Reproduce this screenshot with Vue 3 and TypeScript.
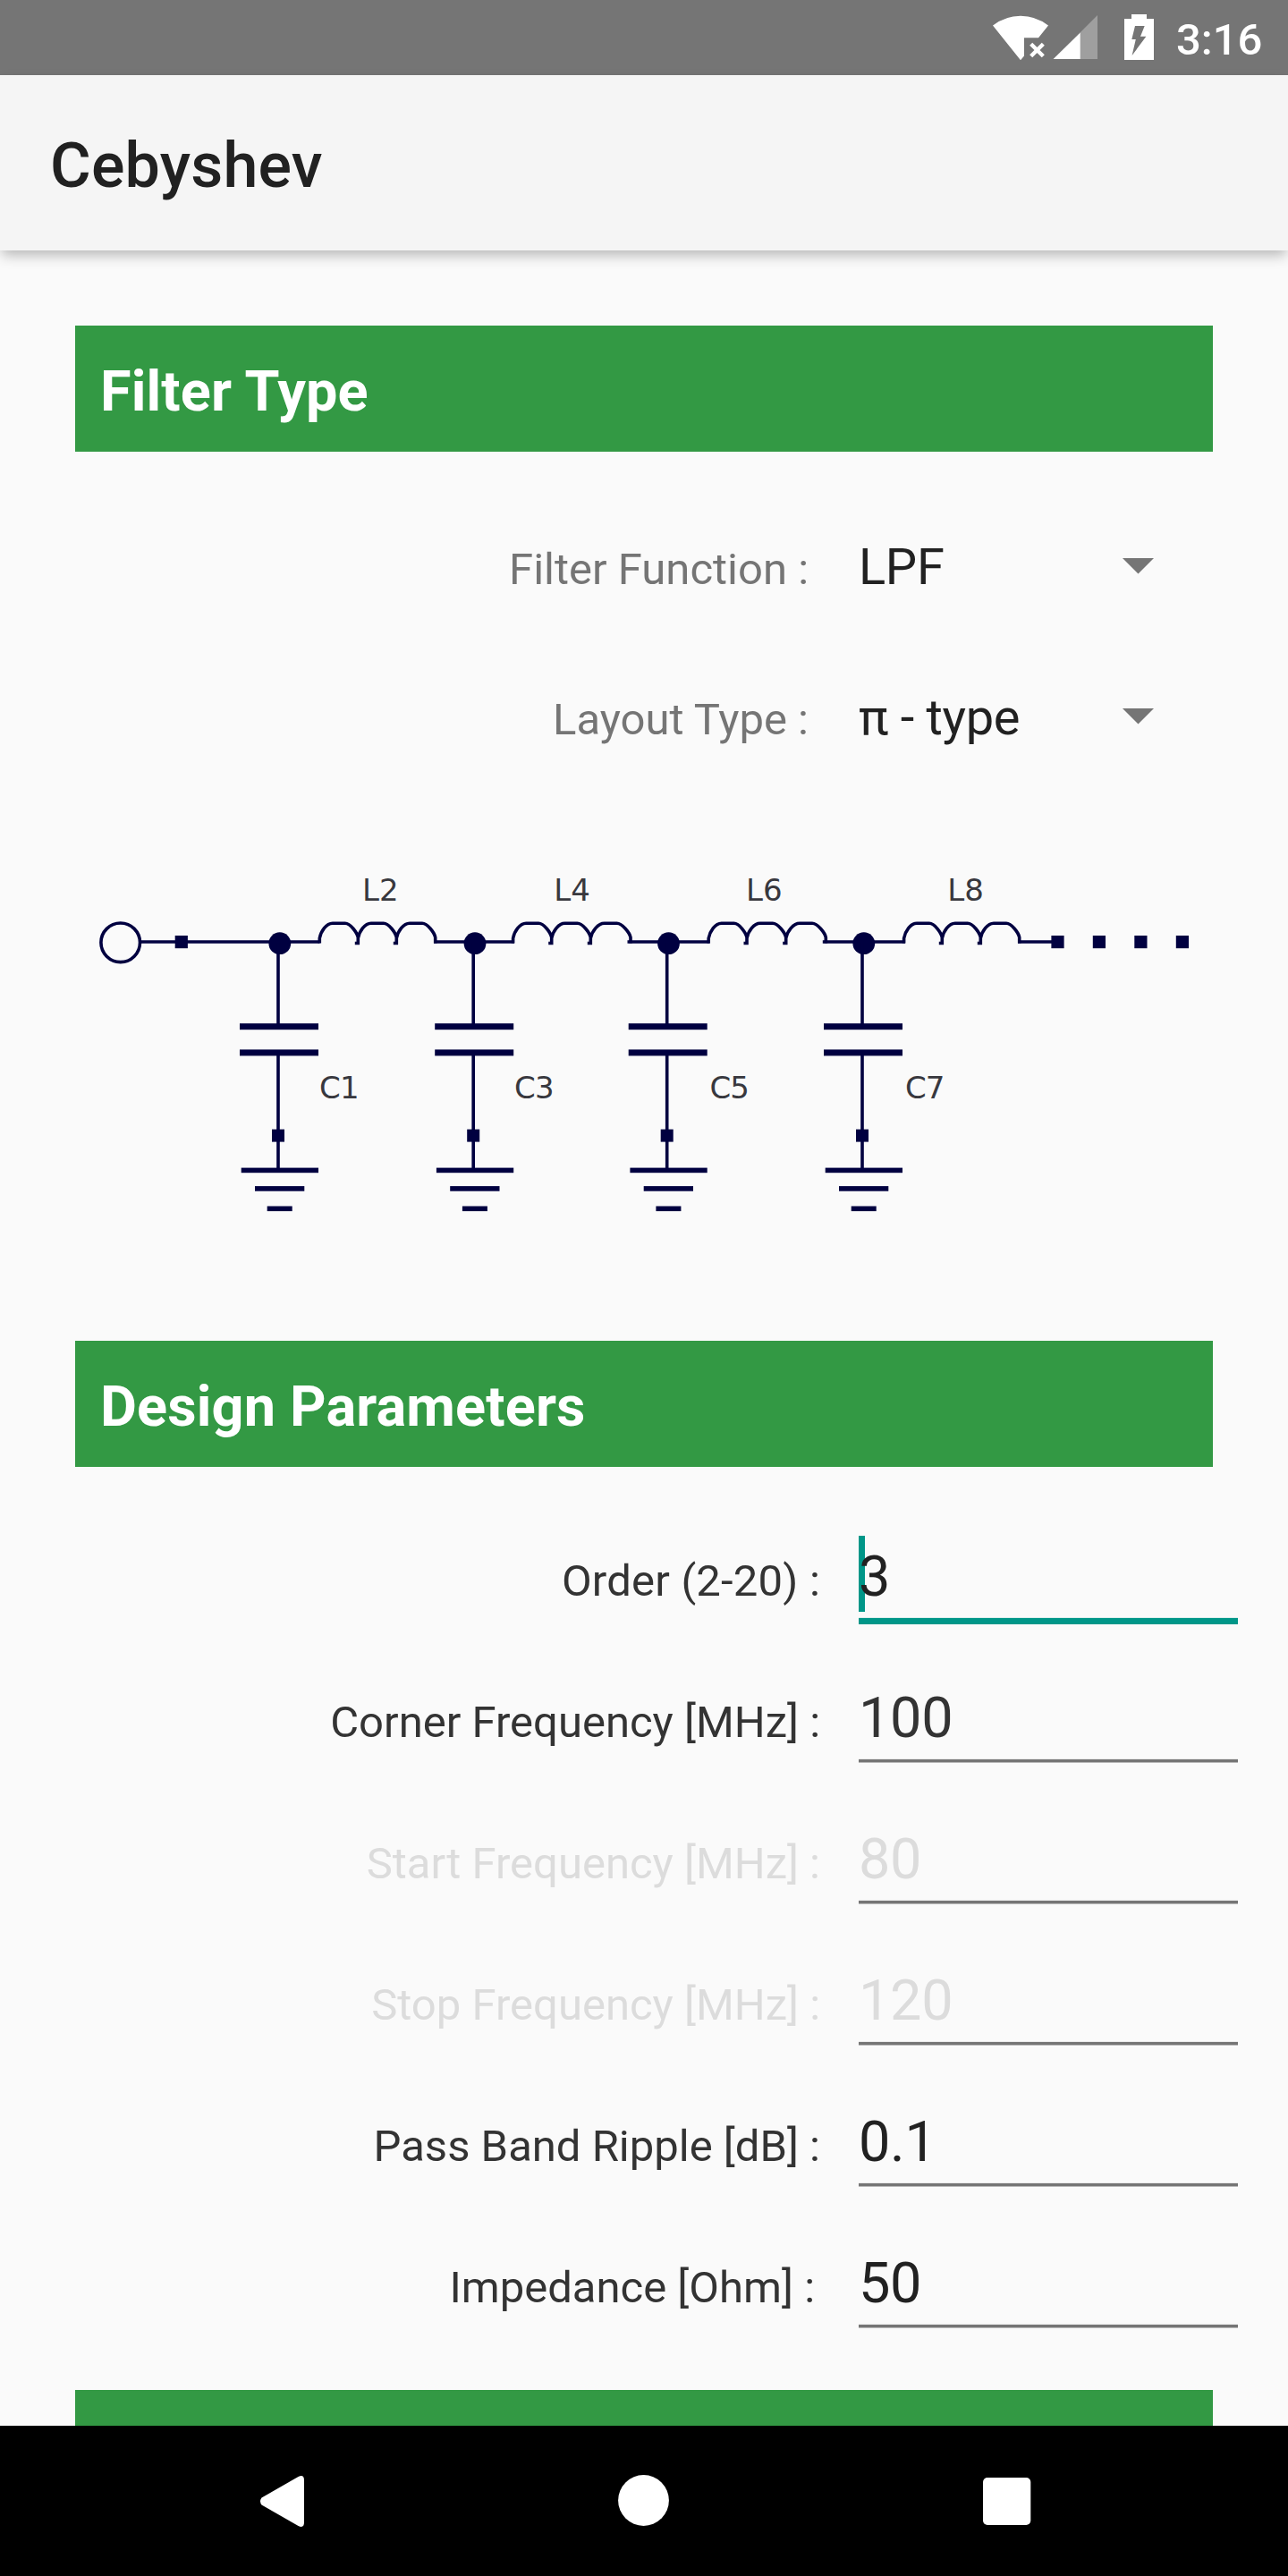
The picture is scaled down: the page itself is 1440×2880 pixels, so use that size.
<script setup lang="ts">
interface Selector {
  label: string
  value: string
}

interface Param {
  label: string
  value: string
  tone: 'strong' | 'soft' | 'disabled'
  focused?: boolean
  inset?: boolean
}

const selectors: Selector[] = [
  { label: 'Filter Function :', value: 'LPF' },
  { label: 'Layout Type :', value: 'π - type' },
]

const params: Param[] = [
  { label: 'Order (2-20) :', value: '3', tone: 'strong', focused: true },
  { label: 'Corner Frequency [MHz] :', value: '100', tone: 'soft' },
  { label: 'Start Frequency [MHz] :', value: '80', tone: 'disabled' },
  { label: 'Stop Frequency [MHz] :', value: '120', tone: 'disabled' },
  { label: 'Pass Band Ripple [dB] :', value: '0.1', tone: 'strong' },
  { label: 'Impedance [Ohm] :', value: '50', tone: 'strong', inset: true },
]

// Shunt branches: horizontal offset from the first capacitor
const shunts = [
  { name: 'C1', dx: 0, tx: 357 },
  { name: 'C3', dx: 218.2, tx: 575 },
  { name: 'C5', dx: 434.7, tx: 793.4 },
  { name: 'C7', dx: 653, tx: 1011.9 },
]

// Series coils: x of the four feet, and where the lead-out wire begins
const coils = [
  { name: 'L2', tx: 405, feet: [357.3, 400.3, 443.3, 486.7], lead: 485 },
  { name: 'L4', tx: 619.3, feet: [573.6, 616.7, 660.3, 705], lead: 701.5 },
  { name: 'L6', tx: 834, feet: [792.2, 835, 878.7, 923.3], lead: 919.8 },
  { name: 'L8', tx: 1059.3, feet: [1010.6, 1053.3, 1096.3, 1139.7], lead: 1138 },
]

const terminals = [195.7, 1175.4, 1221.8, 1268.3, 1314.8]

function coilPath(feet: number[]): string {
  let d = ''
  for (let i = 0; i < 3; i++) {
    const a = feet[i]
    const b = feet[i + 1]
    const m = (a + b) / 2
    d += `M${a} 1054.5V1049C${a + 1.5} 1041 ${m - 14} 1032.3 ${m - 7} 1032.3H${m + 7}`
    d += `C${m + 13} 1032.3 ${b - 1} 1043 ${b} 1048V1054.5`
    if (i < 2) d += `H${b - 3.5}`
  }
  return d
}
</script>

<template>
  <div class="screen">
    <header class="status">
      <svg class="status-icons" width="200" height="84" viewBox="1100 0 200 84">
        <path fill="#fff" d="M1110 28.5Q1124 17.8 1141 17.8T1172 28.5L1161 42.3H1145V62.5L1141 67.2Z" />
        <path stroke="#fff" stroke-width="4.4" fill="none" d="M1152.7 49.3L1166.3 62.7M1166.3 49.3L1152.7 62.7" />
        <path fill="#9f9f9f" d="M1227 17V66H1207V37Z" />
        <path fill="#fff" d="M1177.6 66L1207.7 36.5V66Z" />
        <path
          fill="#fff"
          fill-rule="evenodd"
          d="M1265 16H1282V21H1290V67H1257V21H1265ZM1269 29L1265.3 44H1269.8L1265.6 62L1281.4 40.8H1275L1279.7 29Z"
        />
      </svg>
      <span class="clock">3:16</span>
    </header>

    <div class="appbar">
      <h1 class="title">Cebyshev</h1>
    </div>

    <main class="content">
      <h2 class="banner">Filter Type</h2>

      <div class="selectors">
        <div v-for="s in selectors" :key="s.label" class="selector">
          <span class="selector-label">{{ s.label }}</span>
          <span class="selector-value">{{ s.value }}</span>
          <svg class="arrow" width="35" height="18" viewBox="0 0 35 18">
            <path fill="#757575" d="M0 0H35L17.5 17.5Z" />
          </svg>
        </div>
      </div>

      <svg class="circuit" width="1440" height="430" viewBox="0 950 1440 430">
        <g class="wires">
          <circle cx="134.7" cy="1053.8" r="21.8" />
          <path d="M157 1053H357.5" />
          <path v-for="c in coils" :key="c.name" :d="coilPath(c.feet)" />
          <path :d="`M${coils[0].lead} 1053H575`" />
          <path :d="`M${coils[1].lead} 1053H793.5`" />
          <path :d="`M${coils[2].lead} 1053H1012`" />
          <path :d="`M${coils[3].lead} 1053H1180`" />
        </g>
        <g class="solids">
          <rect v-for="x in terminals" :key="x" :x="x" y="1046" width="14.2" height="14.2" />
          <g v-for="s in shunts" :key="s.name" :transform="`translate(${s.dx} 0)`">
            <circle cx="312.8" cy="1054.7" r="12.4" />
            <rect x="309.2" y="1054" width="3.6" height="92" />
            <rect x="268" y="1144.2" width="88" height="7" />
            <rect x="268" y="1173.4" width="88" height="7" />
            <rect x="309.2" y="1178" width="3.6" height="130" />
            <rect x="304" y="1262.6" width="14" height="14" />
            <rect x="269.7" y="1305.6" width="86.3" height="5.6" />
            <rect x="285" y="1326.1" width="55.3" height="5.6" />
            <rect x="298.7" y="1348.5" width="28" height="5.6" />
          </g>
        </g>
        <g class="names">
          <text v-for="c in coils" :key="c.name" :x="c.tx" y="1007">{{ c.name }}</text>
          <text v-for="s in shunts" :key="s.name" class="tight" :x="s.tx" y="1228.3">{{ s.name }}</text>
        </g>
      </svg>

      <h2 class="banner">Design Parameters</h2>

      <div class="params">
        <div v-for="p in params" :key="p.label" class="param" :class="[p.tone, { focused: p.focused }]">
          <span class="param-label" :class="{ inset: p.inset }">{{ p.label }}</span>
          <div class="field">
            <span v-if="p.focused" class="caret"></span>
            <span class="param-value">{{ p.value }}</span>
            <div class="underline"></div>
          </div>
        </div>
      </div>

      <div class="banner"></div>
    </main>

    <nav class="navbar">
      <svg width="1440" height="168" viewBox="0 2712 1440 168">
        <path
          fill="#fff"
          d="M292.5 2792.5L333.5 2769Q340 2766 340 2773V2820Q340 2827 333.5 2824L292.5 2800.5Q289.5 2796.5 292.5 2792.5Z"
        />
        <circle fill="#fff" cx="719.5" cy="2795.5" r="28.4" />
        <rect fill="#fff" x="1099" y="2770" width="53.3" height="53" rx="5" />
      </svg>
    </nav>
  </div>
</template>

<style>
body {
  margin: 0;
  background: #fafafa;
}
</style>

<style scoped>
.screen {
  width: 1440px;
  height: 2880px;
  display: flex;
  flex-direction: column;
  overflow: hidden;
  background: #fafafa;
  font-family: Roboto, 'Noto Sans', sans-serif;
}

.status {
  flex: none;
  height: 84px;
  display: flex;
  justify-content: flex-end;
  background: #757575;
  color: #fff;
}

.status-icons {
  display: block;
}

.clock {
  width: 125px;
  margin-left: 15px;
  font-size: 49px;
  font-weight: 500;
  line-height: 89px;
  white-space: nowrap;
}

.appbar {
  flex: none;
  position: relative;
  z-index: 1;
  box-sizing: border-box;
  height: 196px;
  padding: 4px 56px 0;
  background: #f5f5f5;
  box-shadow: 0 7px 14px -2px rgba(0, 0, 0, 0.28);
}

.title {
  margin: 0;
  font-size: 70px;
  font-weight: 500;
  line-height: 194px;
  letter-spacing: 0.2px;
  color: #212121;
}

.content {
  flex: none;
  height: 2432px;
  display: flex;
  flex-direction: column;
  overflow: hidden;
  padding-top: 84px;
  box-sizing: border-box;
}

.banner {
  flex: none;
  box-sizing: border-box;
  height: 141px;
  margin: 0 84px;
  padding: 6px 28px 0;
  background: #339944;
  color: #fff;
  font-size: 63px;
  font-weight: 700;
  line-height: 135px;
  letter-spacing: 0.15px;
}

.selectors {
  flex: none;
  margin-top: 44px;
}

.selector {
  display: flex;
  align-items: baseline;
  box-sizing: border-box;
  height: 168px;
  padding-top: 1px;
}

.selector-label {
  width: 904px;
  text-align: right;
  font-size: 49px;
  color: #757575;
}

.selector-value {
  width: 295px;
  margin-left: 56px;
  font-size: 56px;
  line-height: 168px;
  letter-spacing: -0.3px;
  color: #212121;
}

.arrow {
  align-self: flex-start;
  margin-top: 74px;
}

.circuit {
  flex: none;
  display: block;
  margin: 65px 0 119px;
}

.wires {
  fill: none;
  stroke: #000040;
  stroke-width: 3.6;
}

.solids {
  fill: #000040;
}

.names {
  font-family: 'DejaVu Sans', sans-serif;
  font-size: 34px;
  fill: #38383e;
}

.names .tight {
  letter-spacing: -0.8px;
}

.params {
  flex: none;
  margin: 44px 0 40px;
}

.param {
  display: flex;
  align-items: baseline;
  box-sizing: border-box;
  height: 158px;
  padding-top: 33px;
}

.param-label {
  box-sizing: border-box;
  width: 917px;
  text-align: right;
  font-size: 49px;
  color: #333;
}

.param-label.inset {
  padding-right: 6px;
}

.focused .param-label {
  letter-spacing: 0.2px;
}

.field {
  position: relative;
  width: 424px;
  margin-left: 43px;
}

.param-value {
  position: relative;
  display: block;
  font-size: 63px;
  line-height: 91px;
  letter-spacing: -0.3px;
  color: #212121;
}

.caret {
  position: absolute;
  left: 0;
  top: 0;
  width: 7px;
  height: 85px;
  background: #009688;
}

.underline {
  height: 3px;
  border-top: 1px solid #eaeaea;
  border-bottom: 1px solid #b8b8b8;
  background: #757575;
}

.focused .underline {
  height: 7px;
  border-top-color: #dceeec;
  border-bottom: 0;
  background: #009688;
}

.soft .param-value {
  color: #333;
}

.disabled .param-label,
.disabled .param-value {
  color: #dcdcdc;
}

.navbar {
  flex: none;
  height: 168px;
  background: #000;
}

.navbar svg {
  display: block;
}
</style>
